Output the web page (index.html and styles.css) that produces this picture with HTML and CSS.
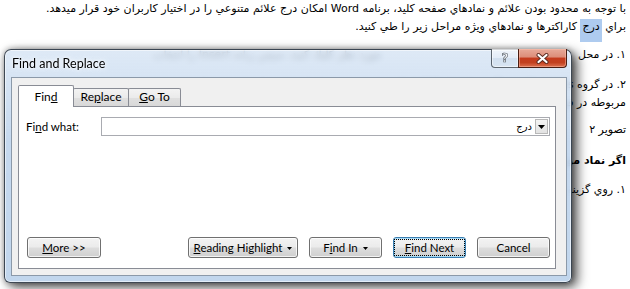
FILE: index.html
```html
<!DOCTYPE html>
<html lang="fa">
<head>
<meta charset="utf-8">
<title>Find and Replace</title>
<link rel="stylesheet" href="styles.css">
</head>
<body>
<div class="doc" dir="rtl">
  <p class="line l1">با توجه به محدود بودن علائم و نمادهاي صفحه كليد، برنامه Word امكان درج علائم متنوعي را در اختيار كاربران خود قرار ميدهد.</p>
  <p class="line l2">براي <span class="sel">درج</span> كاراكترها و نمادهاي ويژه مراحل زير را طي كنيد.</p>
  <p class="line l3"><span>۱. در محل</span><span class="behind">مورد نظر كليك كنيد، سپس زبانه Insert را انتخاب</span></p>
  <p class="line l4">۲. در گروه Symbols روي گزينه Symbol كليك كنيد تا فهرست نمادها نمايش داده شود و نماد</p>
  <p class="line l5">مربوطه در فهرست را انتخاب كنيد.</p>
  <p class="line l6">تصوير ۲</p>
  <p class="line l7 bold">اگر نماد مورد نظر در فهرست نبود:</p>
  <p class="line l8">۱. روي گزينه More Symbols كليك كنيد.</p>
</div>

<div class="dialog">
  <div class="titlebar">
    <span class="title">Find and Replace</span>
    <div class="controls">
      <span class="help">?</span>
      <span class="close">
        <svg width="13" height="11" viewBox="0 0 13 11"><path d="M2.5 2 L10.5 9 M10.5 2 L2.5 9" stroke="#5a2a20" stroke-width="4" stroke-linecap="round"/><path d="M2.5 2 L10.5 9 M10.5 2 L2.5 9" stroke="#ffffff" stroke-width="2.2" stroke-linecap="round"/></svg>
      </span>
    </div>
  </div>
  <div class="client">
    <div class="tabs">
      <div class="tab active"><span>Fin<u>d</u></span></div>
      <div class="tab"><span>Re<u>p</u>lace</span></div>
      <div class="tab"><span><u>G</u>o To</span></div>
    </div>
    <div class="panel">
      <div class="row">
        <label class="label">Fi<u>n</u>d what:</label>
        <div class="combo">
          <span class="val" dir="rtl">درج</span>
          <span class="drop"><svg width="7" height="4" viewBox="0 0 7 4"><path d="M0 0 H7 L3.5 4 Z" fill="#000"/></svg></span>
        </div>
      </div>
      <div class="buttons">
        <div class="btn more"><span class="t"><u>M</u>ore &gt;&gt;</span></div>
        <div class="btn rh"><span class="t"><u>R</u>eading Highlight</span><svg class="arr" width="5" height="3" viewBox="0 0 5 3"><path d="M0 0 H5 L2.5 3 Z" fill="#000"/></svg></div>
        <div class="btn fi"><span class="t">F<u>i</u>nd In</span><svg class="arr" width="5" height="3" viewBox="0 0 5 3"><path d="M0 0 H5 L2.5 3 Z" fill="#000"/></svg></div>
        <div class="btn fn def"><span class="focus"><u>F</u>ind Next</span></div>
        <div class="btn cancel"><span class="t">Cancel</span></div>
      </div>
    </div>
  </div>
</div>
</body>
</html>
```

FILE: styles.css
```css
html, body {
  margin: 0;
  padding: 0;
}
body {
  width: 630px;
  height: 289px;
  overflow: hidden;
  background: #ffffff;
  position: relative;
}

/* background document */
.doc {
  font-family: "DejaVu Sans", "Noto Sans", sans-serif;
  font-size: 11px;
  color: #000;
  padding: 0 4px 0 3px;
  text-align: right;
}
.line {
  margin: 0;
  line-height: 18px;
  white-space: nowrap;
}
.l1 { margin-top: 0; }
.l3 { margin-top: 10px; }
.l4 { margin-top: 12px; }
.l5 { margin-top: 0; }
.l6 { margin-top: 9px; }
.l7 { margin-top: 13px; }
.l8 { margin-top: 11px; }
.bold { font-weight: bold; }
.behind {
  display: inline-block;
  margin-right: 197px;
  vertical-align: top;
}
.sel {
  background: #aecbef;
  padding: 1px 2px 9px 2px;
}

/* dialog window */
.dialog {
  position: absolute;
  left: 4px;
  top: 49px;
  width: 568px;
  height: 234px;
  box-sizing: border-box;
  border: 1px solid rgba(35, 45, 55, 0.85);
  border-radius: 7px 7px 6px 6px;
  background: linear-gradient(to bottom, rgba(214, 228, 244, 0.8), rgba(192, 213, 237, 0.92) 40%, rgba(190, 212, 236, 0.95));
  -webkit-backdrop-filter: blur(3px);
  backdrop-filter: blur(3px);
  box-shadow: inset 0 0 0 1px rgba(255, 255, 255, 0.55), 5px 4px 12px rgba(0, 0, 0, 0.7), 0 0 6px rgba(0, 0, 0, 0.35);
  padding: 0 4px 6px 6px;
  display: flex;
  flex-direction: column;
  font-family: Lato, "Noto Sans", sans-serif;
}
.titlebar {
  height: 27px;
  display: flex;
  align-items: flex-start;
  flex: none;
}
.title {
  margin-top: 6px;
  padding-left: 1px;
  font-size: 12.5px;
  line-height: 16px;
  color: #000;
  text-shadow: 0 0 6px #fff, 0 0 3px #fff;
}
.controls {
  margin-left: auto;
  margin-top: -1px;
  display: flex;
  height: 19px;
}
.help {
  width: 26px;
  height: 18px;
  border: 1px solid rgba(45, 55, 65, 0.75);
  border-top: none;
  border-right: none;
  border-radius: 0 0 0 4px;
  background: linear-gradient(to bottom, rgba(255, 255, 255, 0.55), rgba(235, 242, 250, 0.45) 50%, rgba(195, 212, 230, 0.4) 51%, rgba(215, 228, 240, 0.6));
  box-shadow: inset 0 0 0 1px rgba(255, 255, 255, 0.5);
  display: flex;
  align-items: center;
  justify-content: center;
  font-family: "DejaVu Sans", sans-serif;
  font-weight: bold;
  font-size: 12px;
  color: #f2f4f6;
  -webkit-text-stroke: 0.6px #59616b;
}
.close {
  width: 47px;
  height: 18px;
  border: 1px solid #4a1d12;
  border-top: none;
  border-radius: 0 0 4px 0;
  background: linear-gradient(to bottom, #e7a999 0%, #dc8d79 45%, #c43b1e 50%, #c2401f 75%, #dc7150 100%);
  box-shadow: inset 0 0 0 1px rgba(255, 200, 180, 0.45);
  display: flex;
  align-items: center;
  justify-content: center;
}

/* client area */
.client {
  flex: 1;
  background: #f0f0f0;
  border: 1px solid #8b99a9;
  padding: 7px 10px 6px 6px;
  display: flex;
  flex-direction: column;
  min-height: 0;
}
.tabs {
  display: flex;
  align-items: flex-end;
  height: 21px;
  flex: none;
  position: relative;
  z-index: 1;
}
.tab {
  box-sizing: border-box;
  height: 18px;
  border: 1px solid #898c95;
  border-bottom: none;
  border-radius: 2px 2px 0 0;
  background: linear-gradient(to bottom, #f3f3f3, #ebebeb 50%, #e0e0e0 51%, #d8d8d8);
  font-size: 12px;
  line-height: 16px;
  text-align: center;
  color: #000;
  margin-left: -1px;
}
.tab:nth-child(1) { width: 56px; margin-left: 0; }
.tab:nth-child(2) { width: 56px; }
.tab:nth-child(3) { width: 53px; }
.tab.active {
  height: 22px;
  margin-bottom: -1px;
  background: #ffffff;
  line-height: 22px;
  position: relative;
  z-index: 2;
}
.panel {
  flex: 1;
  background: #ffffff;
  border: 1px solid #898c95;
  padding: 10px 5px 10px 7px;
  display: flex;
  flex-direction: column;
}
.row {
  display: flex;
  align-items: center;
  height: 19px;
}
.label {
  width: 75px;
  font-size: 11.5px;
  color: #000;
}
.combo {
  flex: 1;
  height: 19px;
  box-sizing: border-box;
  border: 1px solid #a9abb1;
  display: flex;
  align-items: center;
  padding: 1px;
}
.val {
  flex: 1;
  text-align: right;
  font-family: "DejaVu Sans", sans-serif;
  font-size: 10px;
  padding-right: 3px;
}
.drop {
  width: 13px;
  height: 15px;
  box-sizing: border-box;
  border: 1px solid #b8b8b8;
  background: linear-gradient(to bottom, #f4f4f4, #e2e2e2);
  display: flex;
  align-items: center;
  justify-content: center;
}
.buttons {
  margin-top: auto;
  display: flex;
  gap: 11px;
  padding: 0 0 0 1px;
}
.btn {
  box-sizing: border-box;
  height: 21px;
  width: 73px;
  border: 1px solid #707070;
  border-radius: 3px;
  background: linear-gradient(to bottom, #f3f3f3 0%, #ebebeb 48%, #dddddd 52%, #cfcfcf 100%);
  box-shadow: inset 0 0 0 1px rgba(255, 255, 255, 0.75);
  font-size: 11.5px;
  color: #000;
  display: flex;
  align-items: center;
  justify-content: center;
}
.btn.more { width: 74px; }
.btn.rh { width: 110px; margin-left: auto; }
.arr { margin-left: 5px; margin-top: 1px; }
.btn.def {
  border-color: #3c7fb1;
  box-shadow: inset 0 0 0 1px #a7dcf8;
}
.focus {
  outline: 1px dotted #000;
  outline-offset: 0;
  padding: 1px 4px;
  width: 61px;
  height: 13px;
  line-height: 13px;
  text-align: center;
}
```
